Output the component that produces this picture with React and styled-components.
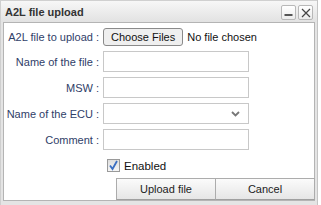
import styled, { createGlobalStyle } from 'styled-components';

const GlobalStyle = createGlobalStyle`
  html, body {
    margin: 0;
    padding: 0;
    background: #ffffff;
    font-family: 'Liberation Sans', Arial, sans-serif;
  }
`;

const fields = [
  { label: 'Name of the file :', kind: 'text' },
  { label: 'MSW :', kind: 'text' },
  { label: 'Name of the ECU :', kind: 'select' },
  { label: 'Comment :', kind: 'text' },
];

export default function App() {
  return (
    <>
      <GlobalStyle />
      <Dialog>
        <TitleBar>
          <Title>A2L file upload</Title>
          <TitleButtons>
            <TitleButton aria-label="minimize">
              <svg width="9" height="9" viewBox="0 0 9 9">
                <rect x="0.5" y="6" width="8" height="2" fill="#555" />
              </svg>
            </TitleButton>
            <TitleButton aria-label="close">
              <svg width="10" height="10" viewBox="0 0 10 10">
                <path d="M1 1 L9 9 M9 1 L1 9" stroke="#444" strokeWidth="1.2" fill="none" />
              </svg>
            </TitleButton>
          </TitleButtons>
        </TitleBar>
        <Content>
          <Form>
            <Row>
              <Label>A2L file to upload :</Label>
              <FileField>
                <FileButton>Choose Files</FileButton>
                <FileHint>No file chosen</FileHint>
              </FileField>
            </Row>
            {fields.map((f) => (
              <Row key={f.label}>
                <Label>{f.label}</Label>
                {f.kind === 'select' ? (
                  <SelectBox>
                    <svg width="9" height="6" viewBox="0 0 9 6">
                      <path d="M1 1 L4.5 4.5 L8 1" stroke="#777" strokeWidth="1.8" fill="none" />
                    </svg>
                  </SelectBox>
                ) : (
                  <Input />
                )}
              </Row>
            ))}
            <Row>
              <span />
              <CheckWrap>
                <CheckBox>
                  <svg width="11" height="11" viewBox="0 0 11 11">
                    <path d="M2 5.5 L4.5 9 L9 1" stroke="#3b6fc2" strokeWidth="1.8" fill="none" />
                  </svg>
                </CheckBox>
                <CheckText>Enabled</CheckText>
              </CheckWrap>
            </Row>
          </Form>
          <ButtonBar>
            <ActionButton>Upload file</ActionButton>
            <ActionButton>Cancel</ActionButton>
          </ButtonBar>
        </Content>
      </Dialog>
    </>
  );
}

const Dialog = styled.div`
  width: 318px;
  height: 205px;
  box-sizing: border-box;
  background: #e4e4e4;
  border-left: 1px solid #cfcfcf;
  border-right: 1px solid #c4c4c4;
  display: flex;
  flex-direction: column;
  padding-bottom: 4px;
`;

const TitleBar = styled.div`
  height: 22px;
  flex-shrink: 0;
  display: flex;
  align-items: center;
  justify-content: space-between;
  padding: 0 4px 0 4px;
  background: linear-gradient(#f7f7f7, #e2e2e2);
  border-top: 1px solid #d0d0d0;
  box-sizing: border-box;
`;

const Title = styled.div`
  font-size: 11px;
  font-weight: bold;
  color: #333;
  padding-top: 1px;
`;

const TitleButtons = styled.div`
  display: flex;
  gap: 2px;
  margin-top: 2px;
`;

const TitleButton = styled.div`
  width: 13px;
  height: 13px;
  border: 1px solid #b8b8b8;
  border-radius: 2px;
  background: linear-gradient(#ffffff, #ececec);
  display: flex;
  align-items: center;
  justify-content: center;
`;

const Content = styled.div`
  margin: 0 2px;
  flex: 1;
  background: #fff;
  border: 1px solid #b4b4b4;
  box-sizing: border-box;
  display: flex;
  flex-direction: column;
  position: relative;
`;

const Form = styled.div`
  display: grid;
  grid-template-columns: 95px 146px;
  grid-template-rows: 18px repeat(4, 21px) 18px;
  column-gap: 4px;
  row-gap: 5px;
  padding: 5px 0 0 0;
  white-space: nowrap;
  font-size: 11px;
  & > :nth-child(2) {
    margin-top: 1px;
  }
`;

const Row = styled.div`
  display: contents;
`;

const Label = styled.span`
  color: #2f4068;
  text-align: right;
  align-self: center;
`;

const FileField = styled.div`
  display: flex;
  align-items: center;
`;

const FileButton = styled.div`
  color: #111;
  height: 18px;
  box-sizing: border-box;
  padding: 0 7px;
  line-height: 16px;
  border: 1px solid #8a8a8a;
  border-radius: 3px;
  background: #efefef;
`;

const FileHint = styled.span`
  color: #111;
  margin-left: 4px;
`;

const Input = styled.div`
  height: 21px;
  box-sizing: border-box;
  border: 1px solid #c8c8c8;
  background: #fff;
`;

const SelectBox = styled(Input)`
  display: flex;
  align-items: center;
  justify-content: flex-end;
  padding-right: 8px;
`;

const CheckWrap = styled.div`
  display: flex;
  align-items: center;
  padding-left: 4px;
  margin-top: 3px;
`;

const CheckBox = styled.div`
  width: 13px;
  height: 13px;
  box-sizing: border-box;
  border: 1px solid #9a9a9a;
  background: linear-gradient(#dedede, #f6f6f6);
  display: flex;
  align-items: center;
  justify-content: center;
`;

const CheckText = styled.span`
  font-size: 11.5px;
  color: #111;
  margin-left: 4px;
`;

const ButtonBar = styled.div`
  position: absolute;
  right: -1px;
  bottom: 0;
  display: flex;
`;

const ActionButton = styled.div`
  width: 100px;
  height: 22px;
  box-sizing: border-box;
  border: 1px solid #acacac;
  border-bottom-color: #a0a0a0;
  background: linear-gradient(#fbfbfb, #e6e6e6);
  font-size: 11px;
  color: #222;
  display: flex;
  align-items: center;
  justify-content: center;
  & + & {
    margin-left: -1px;
  }
`;
